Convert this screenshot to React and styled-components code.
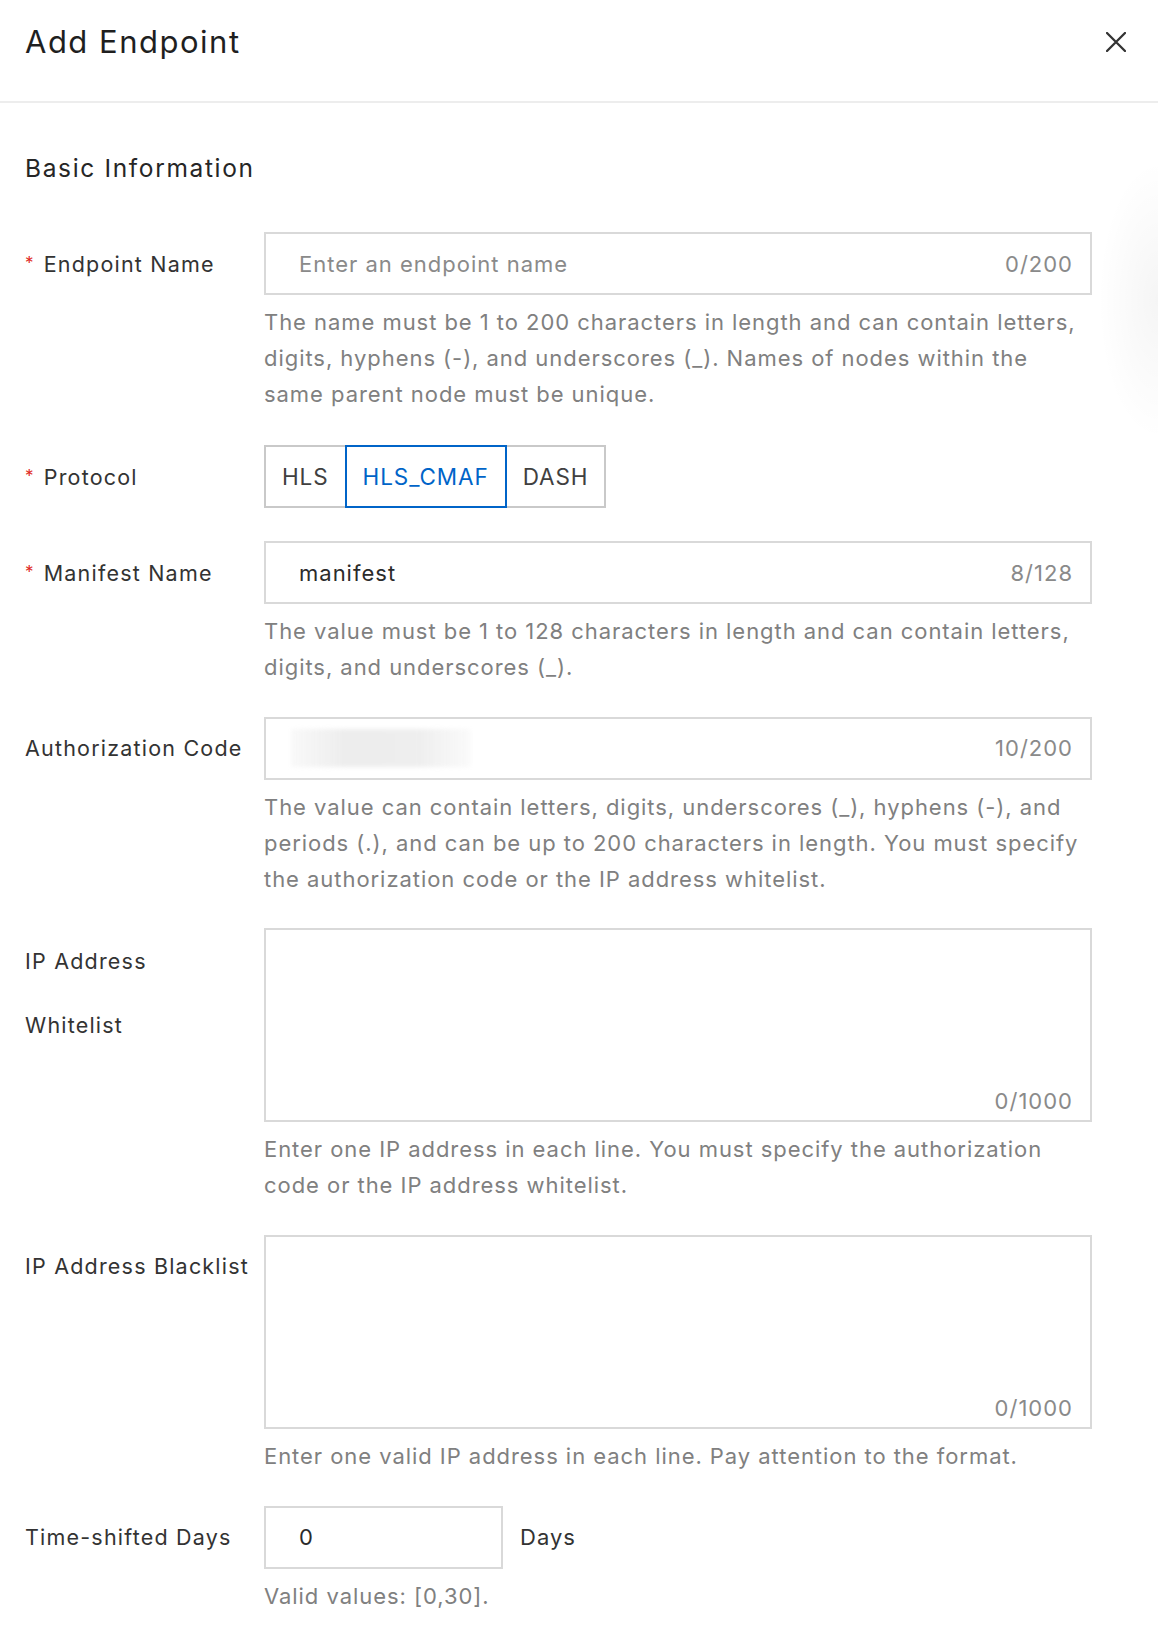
import React from 'react';
import styled, { createGlobalStyle } from 'styled-components';

const GlobalStyle = createGlobalStyle`
	body {
		margin: 0;
		background: #ffffff;
		font-family: Inter, "Liberation Sans", Arial, sans-serif;
		color: #333333;
	}
	* {
		box-sizing: border-box;
	}
`;

const Drawer = styled.div`
	width: 1158px;
	min-height: 1650px;
	background:
		radial-gradient(ellipse 60px 140px at 100% 300px, rgba(0, 0, 0, 0.04), rgba(0, 0, 0, 0) 100%),
		#ffffff;
`;

const Header = styled.div`
	height: 103px;
	display: flex;
	justify-content: space-between;
	align-items: flex-start;
	padding: 18px 32px 0 25px;
	border-bottom: 2px solid #ededed;
`;

const Title = styled.h1`
	margin: 0;
	font-size: 31px;
	line-height: 48px;
	font-weight: 400;
	color: #1f1f1f;
	letter-spacing: 1.5px;
`;

const Close = styled.button`
	border: 0;
	background: none;
	padding: 0;
	margin-top: 14px;
	width: 20px;
	height: 20px;
	cursor: pointer;
	display: flex;
`;

const Body = styled.div`
	padding: 47px 66px 40px 25px;
`;

const SectionTitle = styled.h2`
	margin: 0 0 46px;
	font-size: 24.5px;
	line-height: 36px;
	font-weight: 400;
	color: #262626;
	letter-spacing: 1.65px;
`;

const FormItem = styled.div`
	display: grid;
	grid-template-columns: 239px 1fr;
	margin-bottom: ${(props) => props.gap || 31}px;
`;

const Label = styled.div`
	font-size: 21.5px;
	line-height: ${(props) => props.multi ? 64 : 63}px;
	padding-top: ${(props) => props.multi ? 1 : 0}px;
	color: #333333;
	letter-spacing: 1.2px;
`;

const Star = styled.span`
	color: #e0281e;
	font-size: 17px;
	margin-right: 9px;
	vertical-align: 3px;
`;

const InputBox = styled.div`
	height: ${(props) => props.tall ? 194 : 63}px;
	width: ${(props) => props.narrow ? '239px' : '100%'};
	border: 2px solid #d9d9d9;
	display: flex;
	align-items: ${(props) => props.tall ? 'flex-end' : 'center'};
	justify-content: space-between;
	padding: ${(props) => props.tall ? '0 17px 1px 33px' : '0 17px 0 33px'};
	font-size: 22px;
	letter-spacing: 1px;
`;

const Value = styled.span`
	color: ${(props) => props.placeholder ? '#8a8a8a' : '#2b2b2b'};
`;

const Counter = styled.span`
	color: #8a8a8a;
	line-height: 36px;
	margin-left: auto;
`;

const Blurred = styled.span`
	display: block;
	width: 180px;
	height: 38px;
	margin-left: -8px;
	background: linear-gradient(90deg, rgba(240, 240, 240, 0.4), #ededed 30%, #eeeeee 70%, rgba(246, 246, 246, 0.5));
	filter: blur(2px);
`;

const Help = styled.div`
	margin-top: 10px;
	font-size: 22px;
	line-height: 35.8px;
	color: #808080;
	letter-spacing: 0.95px;
`;

const HelpLine = styled.span`
	display: block;
	white-space: nowrap;
`;

const Segmented = styled.div`
	display: flex;
	height: 63px;
`;

const Segment = styled.button`
	height: 63px;
	padding: 0 16px;
	margin-left: -2px;
	border: 2px solid ${(props) => props.active ? '#0064c8' : '#c9c9c9'};
	background: #ffffff;
	color: ${(props) => props.active ? '#0064c8' : '#404040'};
	font-family: inherit;
	font-size: 22.5px;
	letter-spacing: 0.9px;
	position: relative;
	z-index: ${(props) => props.active ? 1 : 0};
	&:first-child {
		margin-left: 0;
	}
`;

const Inline = styled.div`
	display: flex;
	align-items: center;
	gap: 17px;
`;

const Unit = styled.span`
	font-size: 22px;
	letter-spacing: 1px;
	color: #333333;
`;

const CloseIcon = () => (
	<svg width="20" height="20" viewBox="0 0 20 20">
		<path d="M1 1 L19 19 M19 1 L1 19" stroke="#333333" strokeWidth="2.3" strokeLinecap="round" />
	</svg>
);

const HelpText = ({ lines }) => (
	<Help>
		{lines.map((line) => <HelpLine key={line}>{line}</HelpLine>)}
	</Help>
);

const protocols = ['HLS', 'HLS_CMAF', 'DASH'];

export default function App() {
	return (
		<Drawer>
			<GlobalStyle />
			<Header>
				<Title>Add Endpoint</Title>
				<Close aria-label="Close"><CloseIcon /></Close>
			</Header>
			<Body>
				<SectionTitle>Basic Information</SectionTitle>

				<FormItem gap={33}>
					<Label><Star>*</Star>Endpoint Name</Label>
					<div>
						<InputBox>
							<Value placeholder>Enter an endpoint name</Value>
							<Counter>0/200</Counter>
						</InputBox>
						<HelpText lines={[
							'The name must be 1 to 200 characters in length and can contain letters,',
							'digits, hyphens (-), and underscores (_). Names of nodes within the',
							'same parent node must be unique.',
						]} />
					</div>
				</FormItem>

				<FormItem gap={32}>
					<Label><Star>*</Star>Protocol</Label>
					<Segmented>
						{protocols.map((name) => (
							<Segment key={name} active={name === 'HLS_CMAF'}>{name}</Segment>
						))}
					</Segmented>
				</FormItem>

				<FormItem>
					<Label><Star>*</Star>Manifest Name</Label>
					<div>
						<InputBox>
							<Value>manifest</Value>
							<Counter>8/128</Counter>
						</InputBox>
						<HelpText lines={[
							'The value must be 1 to 128 characters in length and can contain letters,',
							'digits, and underscores (_).',
						]} />
					</div>
				</FormItem>

				<FormItem>
					<Label>Authorization Code</Label>
					<div>
						<InputBox>
							<Blurred />
							<Counter>10/200</Counter>
						</InputBox>
						<HelpText lines={[
							'The value can contain letters, digits, underscores (_), hyphens (-), and',
							'periods (.), and can be up to 200 characters in length. You must specify',
							'the authorization code or the IP address whitelist.',
						]} />
					</div>
				</FormItem>

				<FormItem>
					<Label multi>IP Address<br />Whitelist</Label>
					<div>
						<InputBox tall>
							<Counter>0/1000</Counter>
						</InputBox>
						<HelpText lines={[
							'Enter one IP address in each line. You must specify the authorization',
							'code or the IP address whitelist.',
						]} />
					</div>
				</FormItem>

				<FormItem>
					<Label>IP Address Blacklist</Label>
					<div>
						<InputBox tall>
							<Counter>0/1000</Counter>
						</InputBox>
						<HelpText lines={['Enter one valid IP address in each line. Pay attention to the format.']} />
					</div>
				</FormItem>

				<FormItem>
					<Label>Time-shifted Days</Label>
					<div>
						<Inline>
							<InputBox narrow>
								<Value>0</Value>
							</InputBox>
							<Unit>Days</Unit>
						</Inline>
						<HelpText lines={['Valid values: [0,30].']} />
					</div>
				</FormItem>
			</Body>
		</Drawer>
	);
}
